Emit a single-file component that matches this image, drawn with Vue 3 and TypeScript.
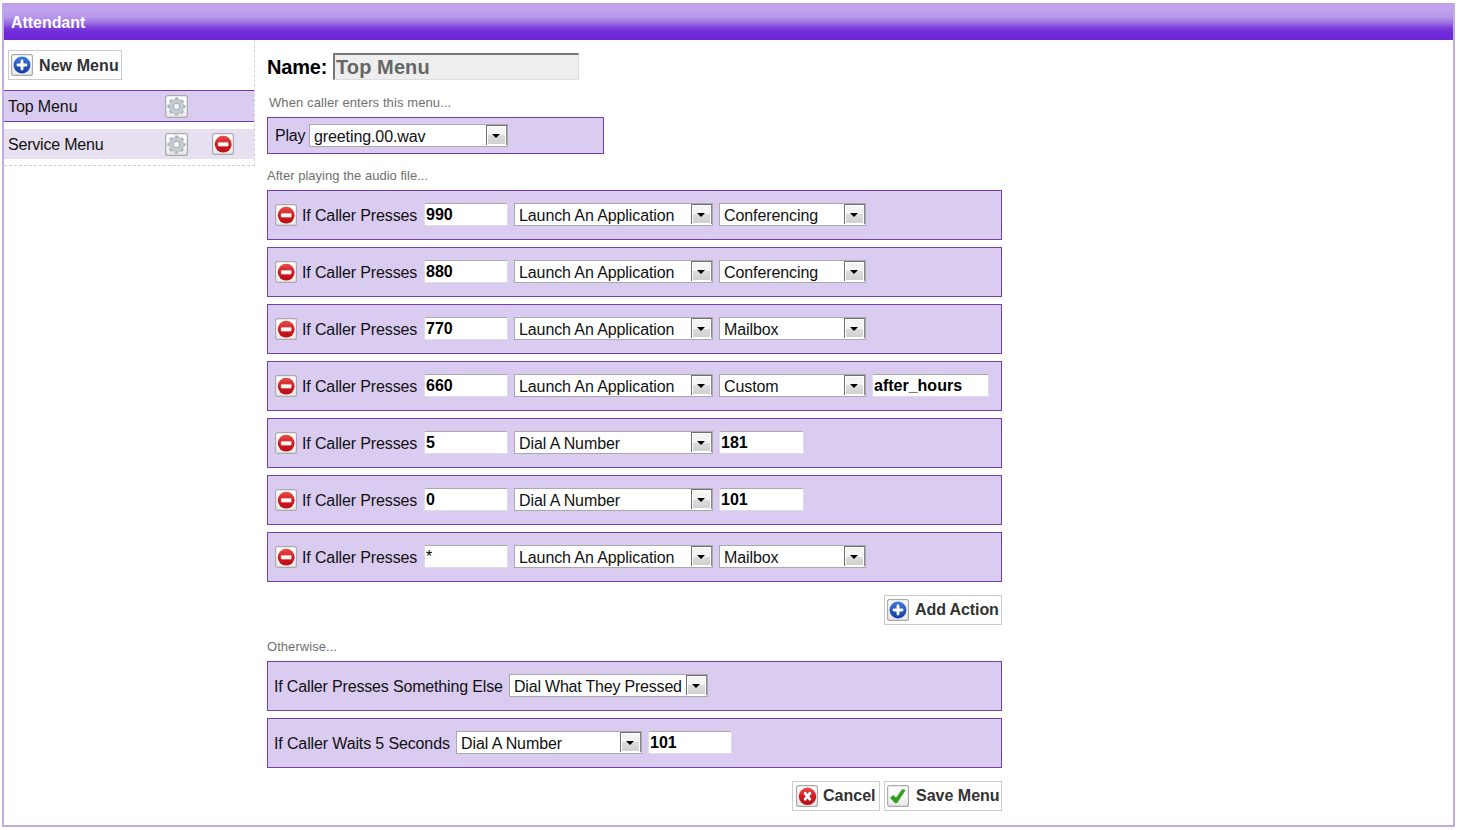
<script setup lang="ts">
interface Action {
  key: string
  action: string
  app?: string
  value?: string
}

const actions: Action[] = [
  { key: '990', action: 'Launch An Application', app: 'Conferencing' },
  { key: '880', action: 'Launch An Application', app: 'Conferencing' },
  { key: '770', action: 'Launch An Application', app: 'Mailbox' },
  { key: '660', action: 'Launch An Application', app: 'Custom', value: 'after_hours' },
  { key: '5', action: 'Dial A Number', value: '181' },
  { key: '0', action: 'Dial A Number', value: '101' },
  { key: '*', action: 'Launch An Application', app: 'Mailbox' },
]
</script>

<template>
  <svg class="defs" aria-hidden="true">
    <defs>
      <linearGradient id="tile" x1="0" y1="0" x2="0" y2="1">
        <stop offset="0" stop-color="#fff" /><stop offset=".5" stop-color="#fbfbfb" /><stop offset="1" stop-color="#e6e6e6" />
      </linearGradient>
      <linearGradient id="blue" x1="0" y1="0" x2="0" y2="1">
        <stop offset="0" stop-color="#3f7be0" /><stop offset="1" stop-color="#1238a8" />
      </linearGradient>
      <linearGradient id="red" x1="0" y1="0" x2="0" y2="1">
        <stop offset="0" stop-color="#e8504c" /><stop offset=".5" stop-color="#d01c20" /><stop offset="1" stop-color="#b80c14" />
      </linearGradient>
      <symbol id="i-tile" viewBox="0 0 22 22">
        <rect x=".6" y=".6" width="20.8" height="20.8" rx="2" fill="url(#tile)" stroke="#aaa" stroke-width="1.2" />
      </symbol>
      <symbol id="i-minus" viewBox="0 0 22 22">
        <use href="#i-tile" width="22" height="22" />
        <circle cx="11.2" cy="11.2" r="8.4" fill="url(#red)" />
        <rect x="6" y="9.3" width="10.4" height="4" rx=".8" fill="#fff" stroke="#e88" stroke-width=".5" />
      </symbol>
      <symbol id="i-plus" viewBox="0 0 22 22">
        <use href="#i-tile" width="22" height="22" />
        <circle cx="11" cy="11" r="8.5" fill="url(#blue)" />
        <path d="M11 7v8M7 11h8" stroke="#fff" stroke-width="2.9" stroke-linecap="round" />
      </symbol>
      <symbol id="i-cross" viewBox="0 0 22 22">
        <use href="#i-tile" width="22" height="22" />
        <circle cx="11.5" cy="11.3" r="8.7" fill="url(#red)" />
        <path d="M9.2 8.4l4.6 5.8M13.8 8.4l-4.6 5.8" stroke="#fff" stroke-width="2.9" stroke-linecap="round" />
      </symbol>
      <symbol id="i-check" viewBox="0 0 22 22">
        <use href="#i-tile" width="22" height="22" />
        <path d="M3.2 12.8l3-2.6 3 2.6 6-8.6 3.2 1-8.2 12.6-2.2.3z" fill="#2f9e1c" stroke="#55b53e" stroke-width=".5" />
      </symbol>
      <symbol id="i-gear" viewBox="0 0 22 22">
        <use href="#i-tile" width="22" height="22" />
        <circle cx="11" cy="11" r="7.6" fill="none" stroke="#a7b3bb" stroke-width="2.2" stroke-dasharray="3.2 2.77" stroke-dashoffset="1.6" />
        <circle cx="11" cy="11" r="5.2" fill="none" stroke="#c5ced4" stroke-width="4" />
        <circle cx="11" cy="11" r="6.7" fill="none" stroke="#a9b6bf" stroke-width=".7" />
        <circle cx="11" cy="11" r="3.1" fill="#f5f7f8" stroke="#9eacb5" stroke-width="1.1" />
      </symbol>
    </defs>
  </svg>

  <div class="panel">
    <header class="title">Attendant</header>
    <div class="body">
      <aside class="side">
        <button class="btn new"><svg class="ico"><use href="#i-plus" /></svg><span>New Menu</span></button>
        <div class="item active">
          <span class="item-name">Top Menu</span>
          <svg class="gear"><use href="#i-gear" /></svg>
        </div>
        <div class="item">
          <span class="item-name service">Service Menu</span>
          <svg class="gear"><use href="#i-gear" /></svg>
          <svg class="ico remove"><use href="#i-minus" /></svg>
        </div>
      </aside>

      <main class="main">
        <div class="name-row"><span class="name-label">Name:</span><span class="name-input">Top Menu</span></div>
        <p class="hint enter">When caller enters this menu...</p>
        <div class="box play">
          <span class="play-label">Play</span>
          <span class="select play-select"><span class="val">greeting.00.wav</span><i class="arrow"></i></span>
        </div>
        <p class="hint after">After playing the audio file...</p>

        <div class="rows">
          <div v-for="(a, i) in actions" :key="i" class="box row">
            <svg class="ico del"><use href="#i-minus" /></svg>
            <span class="press">If Caller Presses</span>
            <span class="field" :class="{ star: a.key === '*' }">{{ a.key }}</span>
            <span class="select"><span class="val">{{ a.action }}</span><i class="arrow"></i></span>
            <span v-if="a.app" class="select app"><span class="val">{{ a.app }}</span><i class="arrow"></i></span>
            <span v-if="a.value" class="field" :class="a.app ? 'custom' : 'number'">{{ a.value }}</span>
          </div>
        </div>

        <div class="buttons add">
          <button class="btn action"><svg class="ico"><use href="#i-plus" /></svg><span>Add Action</span></button>
        </div>

        <p class="hint other">Otherwise...</p>
        <div class="rows">
          <div class="box row plain">
            <span class="else">If Caller Presses Something Else</span>
            <span class="select"><span class="val tight">Dial What They Pressed</span><i class="arrow"></i></span>
          </div>
          <div class="box row plain">
            <span class="wait">If Caller Waits 5 Seconds</span>
            <span class="select short"><span class="val">Dial A Number</span><i class="arrow"></i></span>
            <span class="field">101</span>
          </div>
        </div>

        <div class="buttons save">
          <button class="btn cancel"><svg class="ico"><use href="#i-cross" /></svg><span>Cancel</span></button>
          <button class="btn"><svg class="ico"><use href="#i-check" /></svg><span class="save-text">Save Menu</span></button>
        </div>
      </main>
    </div>
  </div>
</template>

<style>
body { background: #fff; overflow: hidden; }
</style>

<style scoped>
* { box-sizing: border-box; }
.defs { position: absolute; width: 0; height: 0; }
.panel {
  width: 1453px; height: 824px; margin: 3px 0 0 2px;
  border: 2px solid #c3aae0; border-top: 0;
  font: 16px/20px "Liberation Sans", Arial, sans-serif; color: #111;
}
.title {
  height: 37px; padding: 10px 0 0 7px; color: #fff; font-weight: bold; letter-spacing: -0.05px;
  background: linear-gradient(#bd9de8 0, #c1a4ee 20%, #b797ea 38%, #9b6fe2 54%, #7a3cda 68%, #6f29d8 80%, #6c26d5 100%);
}
.body { display: flex; align-items: flex-start; }
.side { width: 251px; height: 126px; padding-top: 10px; border-right: 1px dashed #d3cfdc; border-bottom: 1px dashed #d0d0d0; }
.btn {
  display: flex; align-items: center; width: 118px; height: 30px; padding: 0 0 0 2px; background: #fff;
  border: 1px solid #ccc; font: bold 16px/20px "Liberation Sans", Arial, sans-serif; color: #333; white-space: nowrap;
}
.btn span { margin-left: 6px; }
.btn .save-text { margin-left: 7px; }
.btn.action span { margin-left: 6px; letter-spacing: -0.1px; }
.btn.new { width: 114px; margin-left: 4px; }
.btn.new span { padding-top: 1px; letter-spacing: 0.08px; }
.btn.cancel { width: 88px; padding-left: 3px; }
.btn.cancel span { margin-left: 5px; }
.ico { width: 22px; height: 22px; flex: none; }
.gear { width: 23px; height: 23px; flex: none; }
.item { display: flex; align-items: center; height: 30px; margin-top: 7px; padding-left: 4px; background: #e6e0f0; }
.item.active { height: 32px; margin-top: 10px; background: #dacbf0; border: 1px solid #7440a8; border-width: 1px 0; }
.item-name { width: 157px; padding-top: 2px; letter-spacing: -0.1px; }
.item-name.service { letter-spacing: -0.2px; }
.remove { margin-left: 24px; }
.main { width: 735px; margin-left: 12px; padding-top: 13px; }
.name-row { display: flex; height: 27px; font-weight: bold; font-size: 20px; line-height: 28px; color: #000; }
.name-label { width: 66px; letter-spacing: -0.2px; }
.name-input {
  width: 246px; padding-left: 1px; line-height: 24px; color: #666; background: #eee; letter-spacing: 0.1px;
  border: 1px solid #ddd; border-top: 2px solid #777; border-left: 2px solid #777;
}
.hint { margin: 0; font-size: 13px; line-height: 16px; color: #707070; white-space: nowrap; }
.enter { padding: 15px 0 0 2px; height: 37px; letter-spacing: 0.1px; }
.after { padding-top: 14px; height: 36px; letter-spacing: 0.02px; }
.other { padding-top: 14px; height: 36px; letter-spacing: 0.05px; }
.box { display: flex; background: #dacbf0; border: 1px solid #7440a8; }
.play { width: 337px; height: 37px; padding: 6px 0 0 7px; }
.play-label { width: 34px; line-height: 23px; letter-spacing: -0.2px; }
.rows { display: flex; flex-direction: column; gap: 7px; }
.row { height: 50px; padding: 12px 0 0 7px; line-height: 26px; white-space: nowrap; }
.plain { padding-left: 6px; }
.del { margin-top: 1px; }
.press { width: 127px; padding-left: 5px; letter-spacing: -0.13px; }
.else { width: 235px; letter-spacing: -0.16px; }
.wait { width: 182px; letter-spacing: -0.13px; }
.field {
  width: 84px; height: 23px; margin-right: 6px; padding-left: 1px; border: 1px solid #e0dce6; border-top-color: #aaa; border-radius: 2px;
  background: #fff; color: #000; font-weight: bold; line-height: 21px;
}
.field.number { width: 85px; }
.field.custom { width: 117px; }
.field.star { font-weight: normal; }
.select {
  display: flex; justify-content: space-between; width: 199px; height: 23px; margin-right: 6px;
  border: 1px solid #aaa; background: #fff; line-height: 23px; white-space: nowrap;
}
.select.app { width: 147px; }
.select.short { width: 186px; }
.val { padding-left: 4px; letter-spacing: -0.1px; }
.val.tight { letter-spacing: -0.2px; }
.arrow {
  display: flex; align-items: center; justify-content: center; width: 21px; height: 20px; padding: 1px 1px 0 0; flex: none;
  border: 1px solid #707070; border-bottom: 0; border-right-color: #888; background: linear-gradient(#f4f4f4 0 50%, #dcdcdc 50%, #cfcfcf);
  box-shadow: inset 0 0 0 1px #fff;
}
.arrow::after { content: ""; border: 4px solid transparent; border-top-color: #000; border-bottom: 0; }
.buttons { display: flex; justify-content: flex-end; gap: 4px; }
.add { padding-top: 13px; }
.save { padding-top: 13px; }
</style>
